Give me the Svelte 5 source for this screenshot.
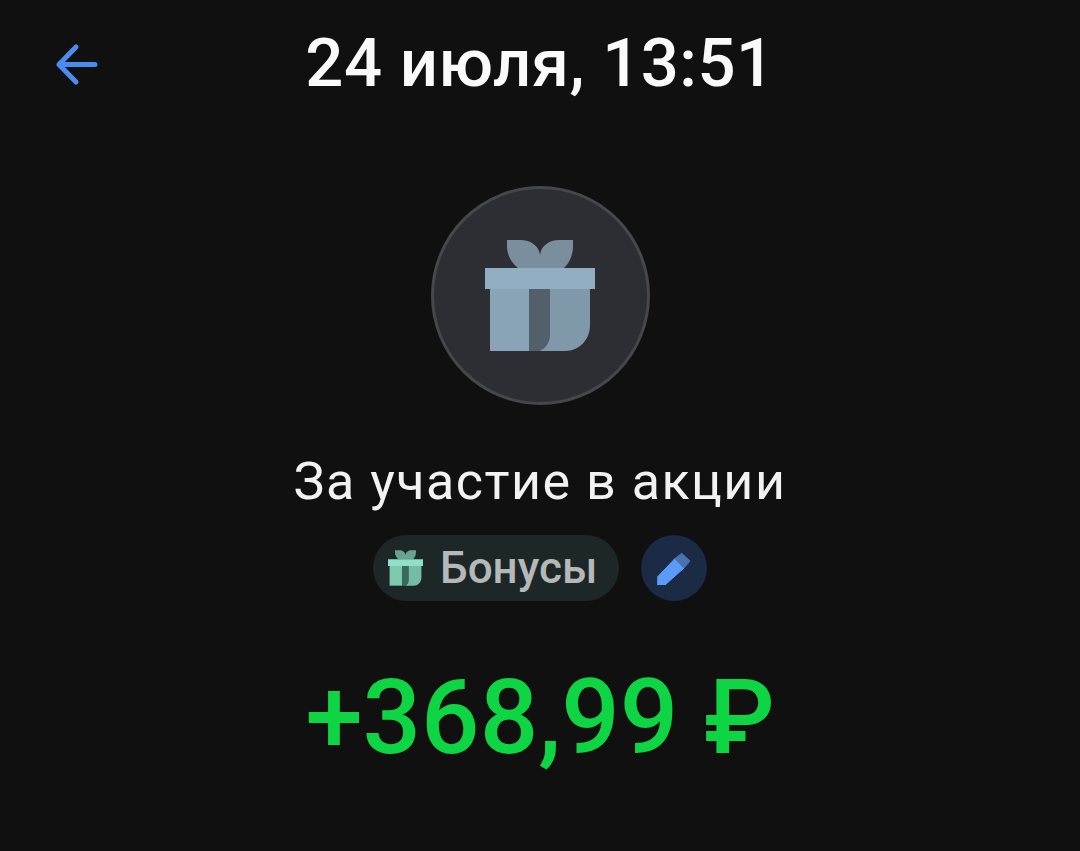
<script>
  const gift = { lid: '#92aec2', left: '#8aa4b7', right: '#7f98aa', bow: '#7b8e9e', band: '#535f6a' };
  const small = { lid: '#8fe0c8', left: '#7cc9b0', right: '#74bca6', bow: '#66a392', band: '#3a6a5e' };
</script>

{#snippet giftIcon(c)}
  <svg viewBox="0 0 110 111" width="100%" height="100%" aria-hidden="true">
    <path d="M22 0H35C46 0 54 6 55 15C56 6 64 0 74 0H88V6C88 16 84 23 79 28H33C27 23 22 16 22 6Z" fill={c.bow} />
    <path d="M5 49H44V111H5Z" fill={c.left} />
    <path d="M44 49H65V94C65 103 60 109 54 111H44Z" fill={c.band} />
    <path d="M65 49H105V85C105 100 94 111 80 111H54C60 109 65 103 65 94Z" fill={c.right} />
    <path d="M0 28H110V49H0Z" fill={c.lid} />
  </svg>
{/snippet}

<main class="screen">
  <header class="top">
    <button class="back" aria-label="Назад">
      <svg viewBox="0 0 46 46" width="46" height="46" fill="none" stroke="#4a8cf0" stroke-width="5" stroke-linecap="round" stroke-linejoin="round">
        <path d="M41 22.500H5M22 5 5 22.500 22 40" />
      </svg>
    </button>
    <h1>24 июля, 13:51</h1>
  </header>

  <div class="avatar">
    <div class="avatar-icon">{@render giftIcon(gift)}</div>
  </div>

  <p class="desc">За участие в акции</p>

  <div class="tags">
    <div class="pill">
      <span class="pill-icon">{@render giftIcon(small)}</span>
      <span class="pill-text">Бонусы</span>
    </div>
    <button class="edit" aria-label="Изменить">
      <svg viewBox="0 0 34 34" width="34" height="34">
        <path d="M0.700 34V25.700L18 7.500 27 17 8 34Z" fill="#5b9bf8" stroke="#5b9bf8" stroke-width="1" stroke-linejoin="round" />
        <path d="M18 7.500 24.700 2.300 33 10 27 17Z" fill="#4a72ae" stroke="#4a72ae" stroke-width="1" stroke-linejoin="round" />
      </svg>
    </button>
  </div>

  <div class="amount">+368,99 ₽</div>
</main>

<style>
  :global(body) {
    margin: 0;
    background: #101011;
  }
  .screen {
    width: 1080px;
    height: 851px;
    background: #101011;
    display: flex;
    flex-direction: column;
    align-items: center;
    font-family: Roboto, "Noto Sans", sans-serif;
    overflow: hidden;
  }
  .top {
    position: relative;
    width: 100%;
    height: 186px;
    display: flex;
    justify-content: center;
    box-sizing: border-box;
    padding-top: 26px;
  }
  .back {
    position: absolute;
    left: 54px;
    top: 42px;
    width: 46px;
    height: 46px;
    padding: 0;
    border: 0;
    background: none;
  }
  .back svg, .edit svg { display: block; }
  h1 {
    margin: 0;
    font-size: 67px;
    line-height: 74px;
    font-weight: 500;
    color: #fafafa;
    letter-spacing: 0.5px;
  }
  .avatar {
    width: 219px;
    height: 219px;
    box-sizing: border-box;
    border-radius: 50%;
    background: #2d2e33;
    border: 3px solid #46474b;
    display: flex;
    align-items: center;
    justify-content: center;
    flex: none;
  }
  .avatar-icon {
    width: 110px;
    height: 111px;
  }
  .desc {
    margin: 47px 0 0;
    font-size: 52px;
    line-height: 60px;
    color: #f2f2f2;
    letter-spacing: 1.5px;
  }
  .tags {
    margin-top: 23px;
    display: flex;
    gap: 22px;
  }
  .pill {
    width: 246px;
    height: 66px;
    box-sizing: border-box;
    padding-left: 15px;
    border-radius: 33px;
    background: #1e2727;
    display: flex;
    align-items: center;
    gap: 17px;
  }
  .pill-icon {
    width: 35px;
    height: 36px;
    flex: none;
  }
  .pill-text {
    font-size: 44px;
    line-height: 50px;
    font-weight: 500;
    color: #b4b8b8;
  }
  .edit {
    width: 66px;
    height: 66px;
    padding: 0;
    border: 0;
    border-radius: 50%;
    background: #1b2a45;
    display: flex;
    align-items: center;
    justify-content: center;
  }
  .amount {
    margin-top: 63px;
    font-size: 103px;
    line-height: 108px;
    font-weight: 500;
    color: #0ed543;
  }
</style>
